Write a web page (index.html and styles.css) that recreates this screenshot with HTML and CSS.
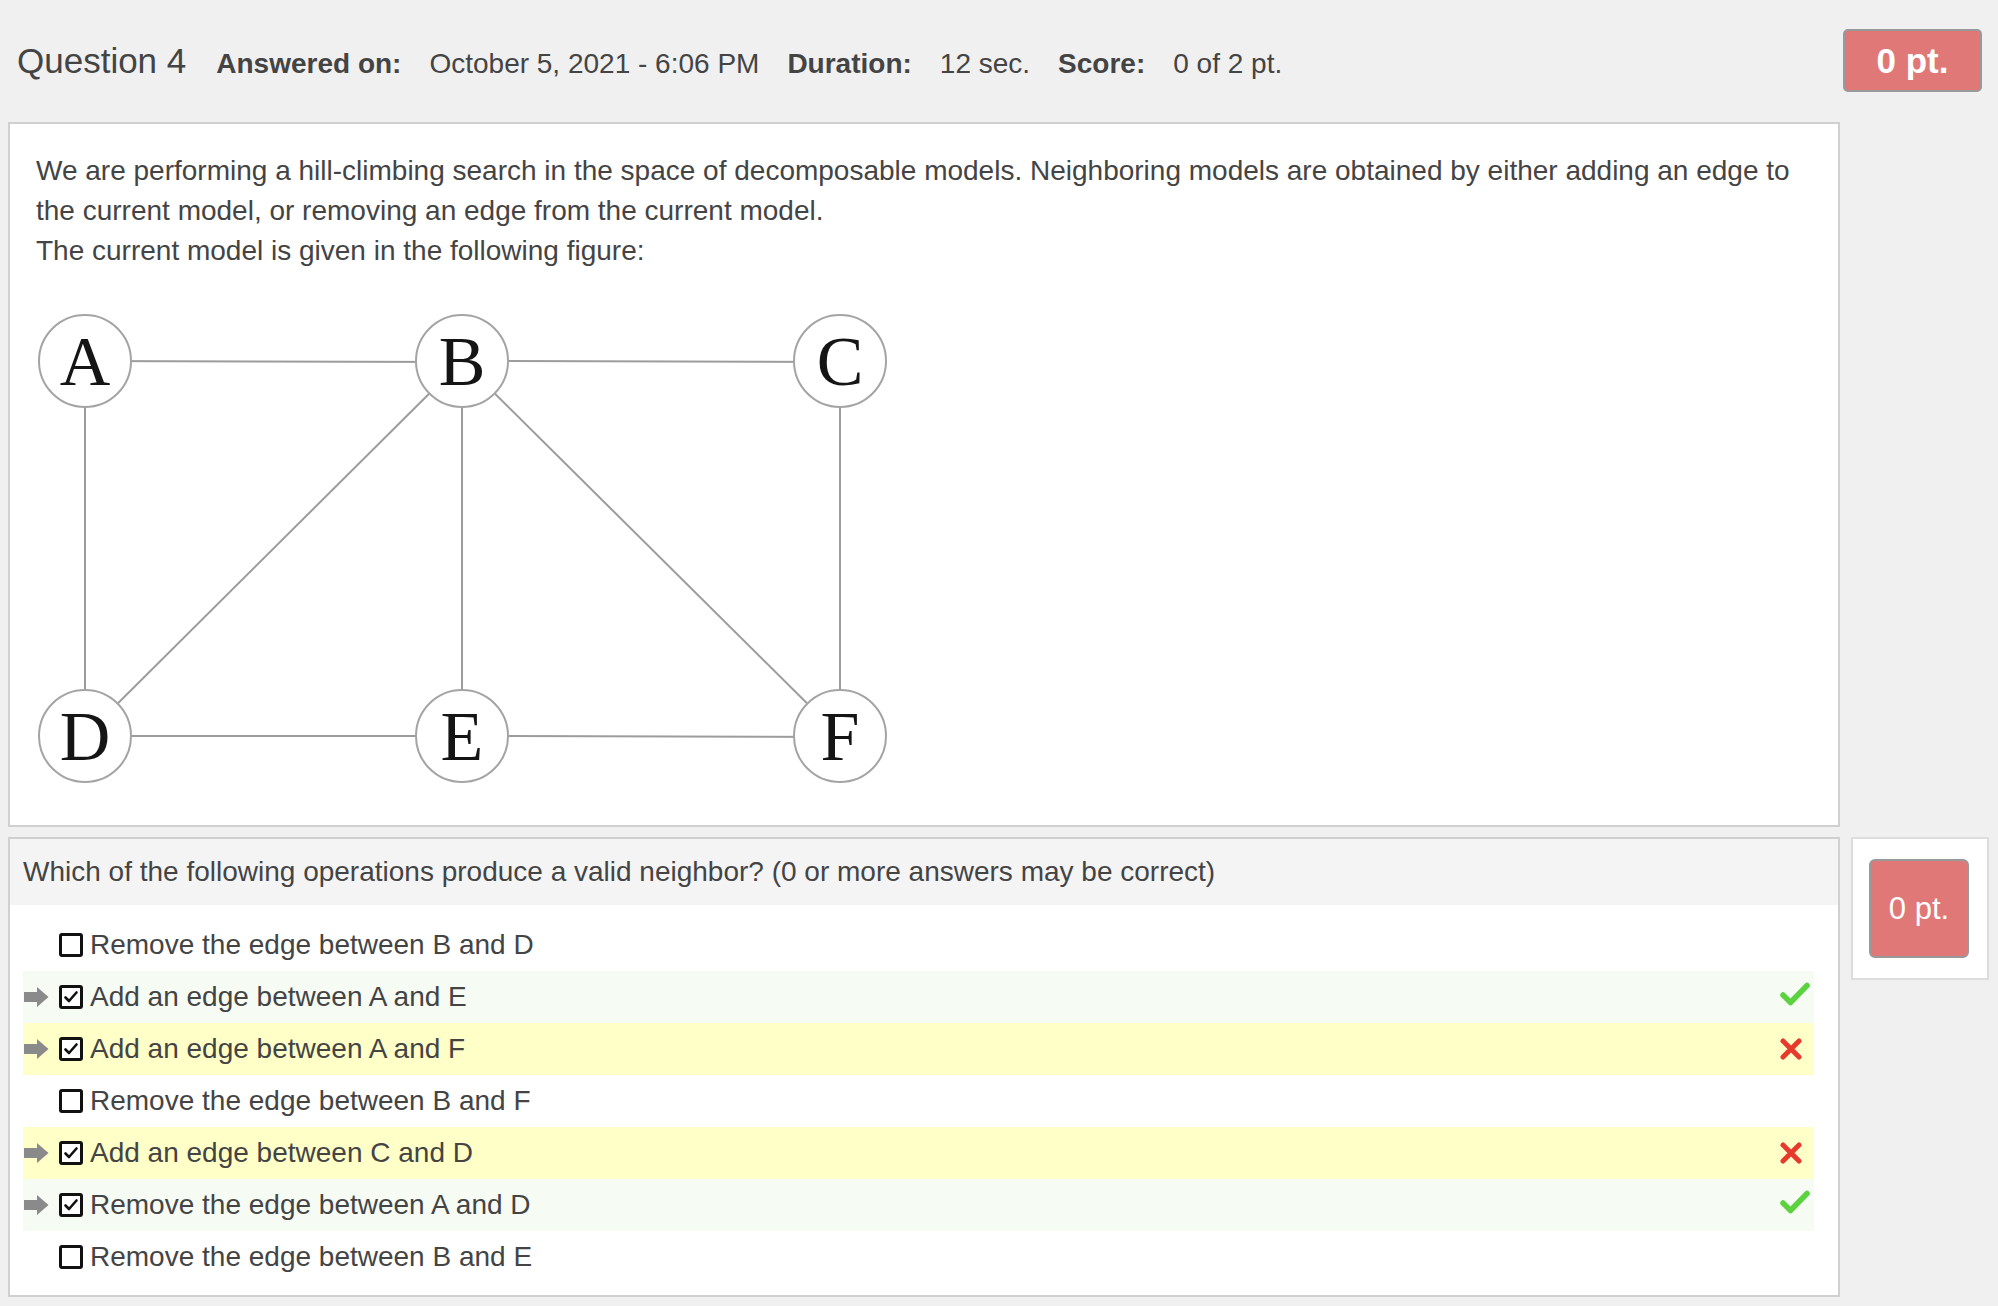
FILE: index.html
```html
<!DOCTYPE html>
<html lang="en">
<head>
<meta charset="utf-8">
<title>Question 4</title>
<link rel="stylesheet" href="styles.css">
</head>
<body>
<div class="page">
  <header class="header">
    <div class="info">
      <span class="title">Question 4</span>
      <span class="label">Answered on:</span>
      <span class="value">October 5, 2021 - 6:06 PM</span>
      <span class="label">Duration:</span>
      <span class="value">12 sec.</span>
      <span class="label">Score:</span>
      <span class="value">0 of 2 pt.</span>
    </div>
    <div class="badge badge-top">0 pt.</div>
  </header>

  <div class="grid">
    <section class="panel panel-intro">
      <p class="intro">We are performing a hill-climbing search in the space of decomposable models. Neighboring models are obtained by either adding an edge to the current model, or removing an edge from the current model.<br>The current model is given in the following figure:</p>
      <svg class="graph" width="860" height="500" viewBox="0 0 860 500">
        <g class="edges">
          <line x1="49" y1="61" x2="426" y2="62"/>
          <line x1="426" y1="61" x2="804" y2="62"/>
          <line x1="49" y1="61" x2="49" y2="436"/>
          <line x1="426" y1="61" x2="49" y2="436"/>
          <line x1="426" y1="61" x2="426" y2="436"/>
          <line x1="426" y1="61" x2="804" y2="436"/>
          <line x1="804" y1="61" x2="804" y2="436"/>
          <line x1="49" y1="436" x2="426" y2="436"/>
          <line x1="426" y1="436" x2="804" y2="437"/>
        </g>
        <g class="nodes">
          <circle cx="49" cy="61" r="46"/>
          <circle cx="426" cy="61" r="46"/>
          <circle cx="804" cy="61" r="46"/>
          <circle cx="49" cy="436" r="46"/>
          <circle cx="426" cy="436" r="46"/>
          <circle cx="804" cy="436" r="46"/>
        </g>
        <g class="labels">
          <text x="49" y="85">A</text>
          <text x="426" y="85">B</text>
          <text x="804" y="85">C</text>
          <text x="49" y="460">D</text>
          <text x="426" y="460">E</text>
          <text x="804" y="460">F</text>
        </g>
      </svg>
    </section>
    <div class="spacer"></div>

    <section class="panel panel-question">
      <div class="qhead">Which of the following operations produce a valid neighbor? (0 or more answers may be correct)</div>
      <ul class="options">
        <li class="opt">
          <span class="arrow-slot"></span>
          <span class="box"></span>
          <span class="opt-text">Remove the edge between B and D</span>
        </li>
        <li class="opt opt-right">
          <span class="arrow-slot"><svg class="arrow" width="26" height="22" viewBox="0 0 26 22"><path d="M1 6h13V1L25.5 11L14 21v-5H1z"/></svg></span>
          <span class="box checked"><svg width="18" height="18" viewBox="0 0 18 18"><path d="M3.5 9.5l3.5 3.5l7.5-8.5"/></svg></span>
          <span class="opt-text">Add an edge between A and E</span>
          <span class="mark"><svg class="ok" width="30" height="24" viewBox="0 0 30 24"><path d="M3 13l7.5 7.5L27 3.5"/></svg></span>
        </li>
        <li class="opt opt-wrong">
          <span class="arrow-slot"><svg class="arrow" width="26" height="22" viewBox="0 0 26 22"><path d="M1 6h13V1L25.5 11L14 21v-5H1z"/></svg></span>
          <span class="box checked"><svg width="18" height="18" viewBox="0 0 18 18"><path d="M3.5 9.5l3.5 3.5l7.5-8.5"/></svg></span>
          <span class="opt-text">Add an edge between A and F</span>
          <span class="mark"><svg class="bad" width="22" height="22" viewBox="0 0 22 22"><path d="M3 3L19 19M19 3L3 19"/></svg></span>
        </li>
        <li class="opt">
          <span class="arrow-slot"></span>
          <span class="box"></span>
          <span class="opt-text">Remove the edge between B and F</span>
        </li>
        <li class="opt opt-wrong">
          <span class="arrow-slot"><svg class="arrow" width="26" height="22" viewBox="0 0 26 22"><path d="M1 6h13V1L25.5 11L14 21v-5H1z"/></svg></span>
          <span class="box checked"><svg width="18" height="18" viewBox="0 0 18 18"><path d="M3.5 9.5l3.5 3.5l7.5-8.5"/></svg></span>
          <span class="opt-text">Add an edge between C and D</span>
          <span class="mark"><svg class="bad" width="22" height="22" viewBox="0 0 22 22"><path d="M3 3L19 19M19 3L3 19"/></svg></span>
        </li>
        <li class="opt opt-right">
          <span class="arrow-slot"><svg class="arrow" width="26" height="22" viewBox="0 0 26 22"><path d="M1 6h13V1L25.5 11L14 21v-5H1z"/></svg></span>
          <span class="box checked"><svg width="18" height="18" viewBox="0 0 18 18"><path d="M3.5 9.5l3.5 3.5l7.5-8.5"/></svg></span>
          <span class="opt-text">Remove the edge between A and D</span>
          <span class="mark"><svg class="ok" width="30" height="24" viewBox="0 0 30 24"><path d="M3 13l7.5 7.5L27 3.5"/></svg></span>
        </li>
        <li class="opt">
          <span class="arrow-slot"></span>
          <span class="box"></span>
          <span class="opt-text">Remove the edge between B and E</span>
        </li>
      </ul>
    </section>

    <aside class="side">
      <div class="badge badge-side">0 pt.</div>
    </aside>
  </div>
</div>
</body>
</html>
```

FILE: styles.css
```css
* {
  box-sizing: border-box;
}

html, body {
  margin: 0;
  padding: 0;
  background: #f0f0f0;
}

body {
  font-family: "Liberation Sans", Arial, Helvetica, sans-serif;
  color: #444444;
}

.page {
  padding: 0 8px 8px 8px;
}

/* Header */
.header {
  display: flex;
  align-items: center;
  justify-content: space-between;
  height: 122px;
}

.info {
  display: flex;
  align-items: baseline;
  gap: 28px;
  padding-left: 9px;
  line-height: 40px;
  margin-top: 2px;
}

.title {
  font-size: 35px;
  margin-right: 2px;
}

.label {
  font-size: 28px;
  font-weight: bold;
}

.value {
  font-size: 28px;
}

.badge {
  background: #e07878;
  color: #ffffff;
  border: 2px solid #999999;
  display: flex;
  align-items: center;
  justify-content: center;
}

.badge-top {
  width: 139px;
  height: 63px;
  border-radius: 5px;
  font-size: 35px;
  font-weight: bold;
  margin-right: 8px;
  margin-top: -1px;
}

/* Grid */
.grid {
  display: grid;
  grid-template-columns: 1832px 138px;
  column-gap: 11px;
  row-gap: 10px;
  align-items: start;
}

.panel {
  background: #ffffff;
  border: 2px solid #d0d0d0;
}

.panel-intro {
  padding: 27px 26px 25px 26px;
}

.intro {
  margin: 0;
  font-size: 28px;
  line-height: 40px;
}

.graph {
  display: block;
  margin-top: 29px;
}

.edges line {
  stroke: #9c9c9c;
  stroke-width: 2;
}

.nodes circle {
  fill: #ffffff;
  stroke: #a4a4a4;
  stroke-width: 2;
}

.labels text {
  font-family: "Liberation Serif", "Times New Roman", serif;
  font-size: 70px;
  fill: #151515;
  text-anchor: middle;
}

/* Question panel */
.qhead {
  background: #f4f4f4;
  font-size: 28px;
  line-height: 66px;
  padding-left: 13px;
}

.options {
  list-style: none;
  margin: 0;
  padding: 14px 24px 12px 13px;
}

.opt {
  display: flex;
  align-items: center;
  height: 52px;
  font-size: 28px;
}

.opt-right {
  background: #f6fbf4;
}

.opt-wrong {
  background: #ffffc8;
}

.arrow-slot {
  width: 26px;
  height: 22px;
  flex: none;
  display: flex;
}

.arrow path {
  fill: #8a8a8a;
}

.box {
  flex: none;
  width: 24px;
  height: 24px;
  margin-left: 10px;
  border: 3px solid #111111;
  border-radius: 3px;
  background: #ffffff;
  display: flex;
  align-items: center;
  justify-content: center;
}

.box svg {
  display: block;
}

.box path {
  fill: none;
  stroke: #111111;
  stroke-width: 2.6;
  stroke-linecap: round;
  stroke-linejoin: round;
}

.opt-text {
  margin-left: 7px;
  line-height: 52px;
}

.mark {
  margin-left: auto;
  width: 32px;
  display: flex;
  justify-content: center;
  margin-right: 3px;
}

.ok path {
  fill: none;
  stroke: #5ad33f;
  stroke-width: 5.5;
  stroke-linecap: round;
  stroke-linejoin: round;
}

.opt-right .mark {
  margin-top: -6px;
}

.bad path {
  fill: none;
  stroke: #e63a2e;
  stroke-width: 5;
  stroke-linecap: round;
}

.opt-wrong .mark {
  justify-content: flex-start;
  padding-left: 1px;
}

/* Side score */
.side {
  background: #ffffff;
  border: 2px solid #dddddd;
  height: 143px;
  padding: 20px 0 0 16px;
}

.badge-side {
  width: 100px;
  height: 99px;
  border-radius: 6px;
  font-size: 31px;
}
```
